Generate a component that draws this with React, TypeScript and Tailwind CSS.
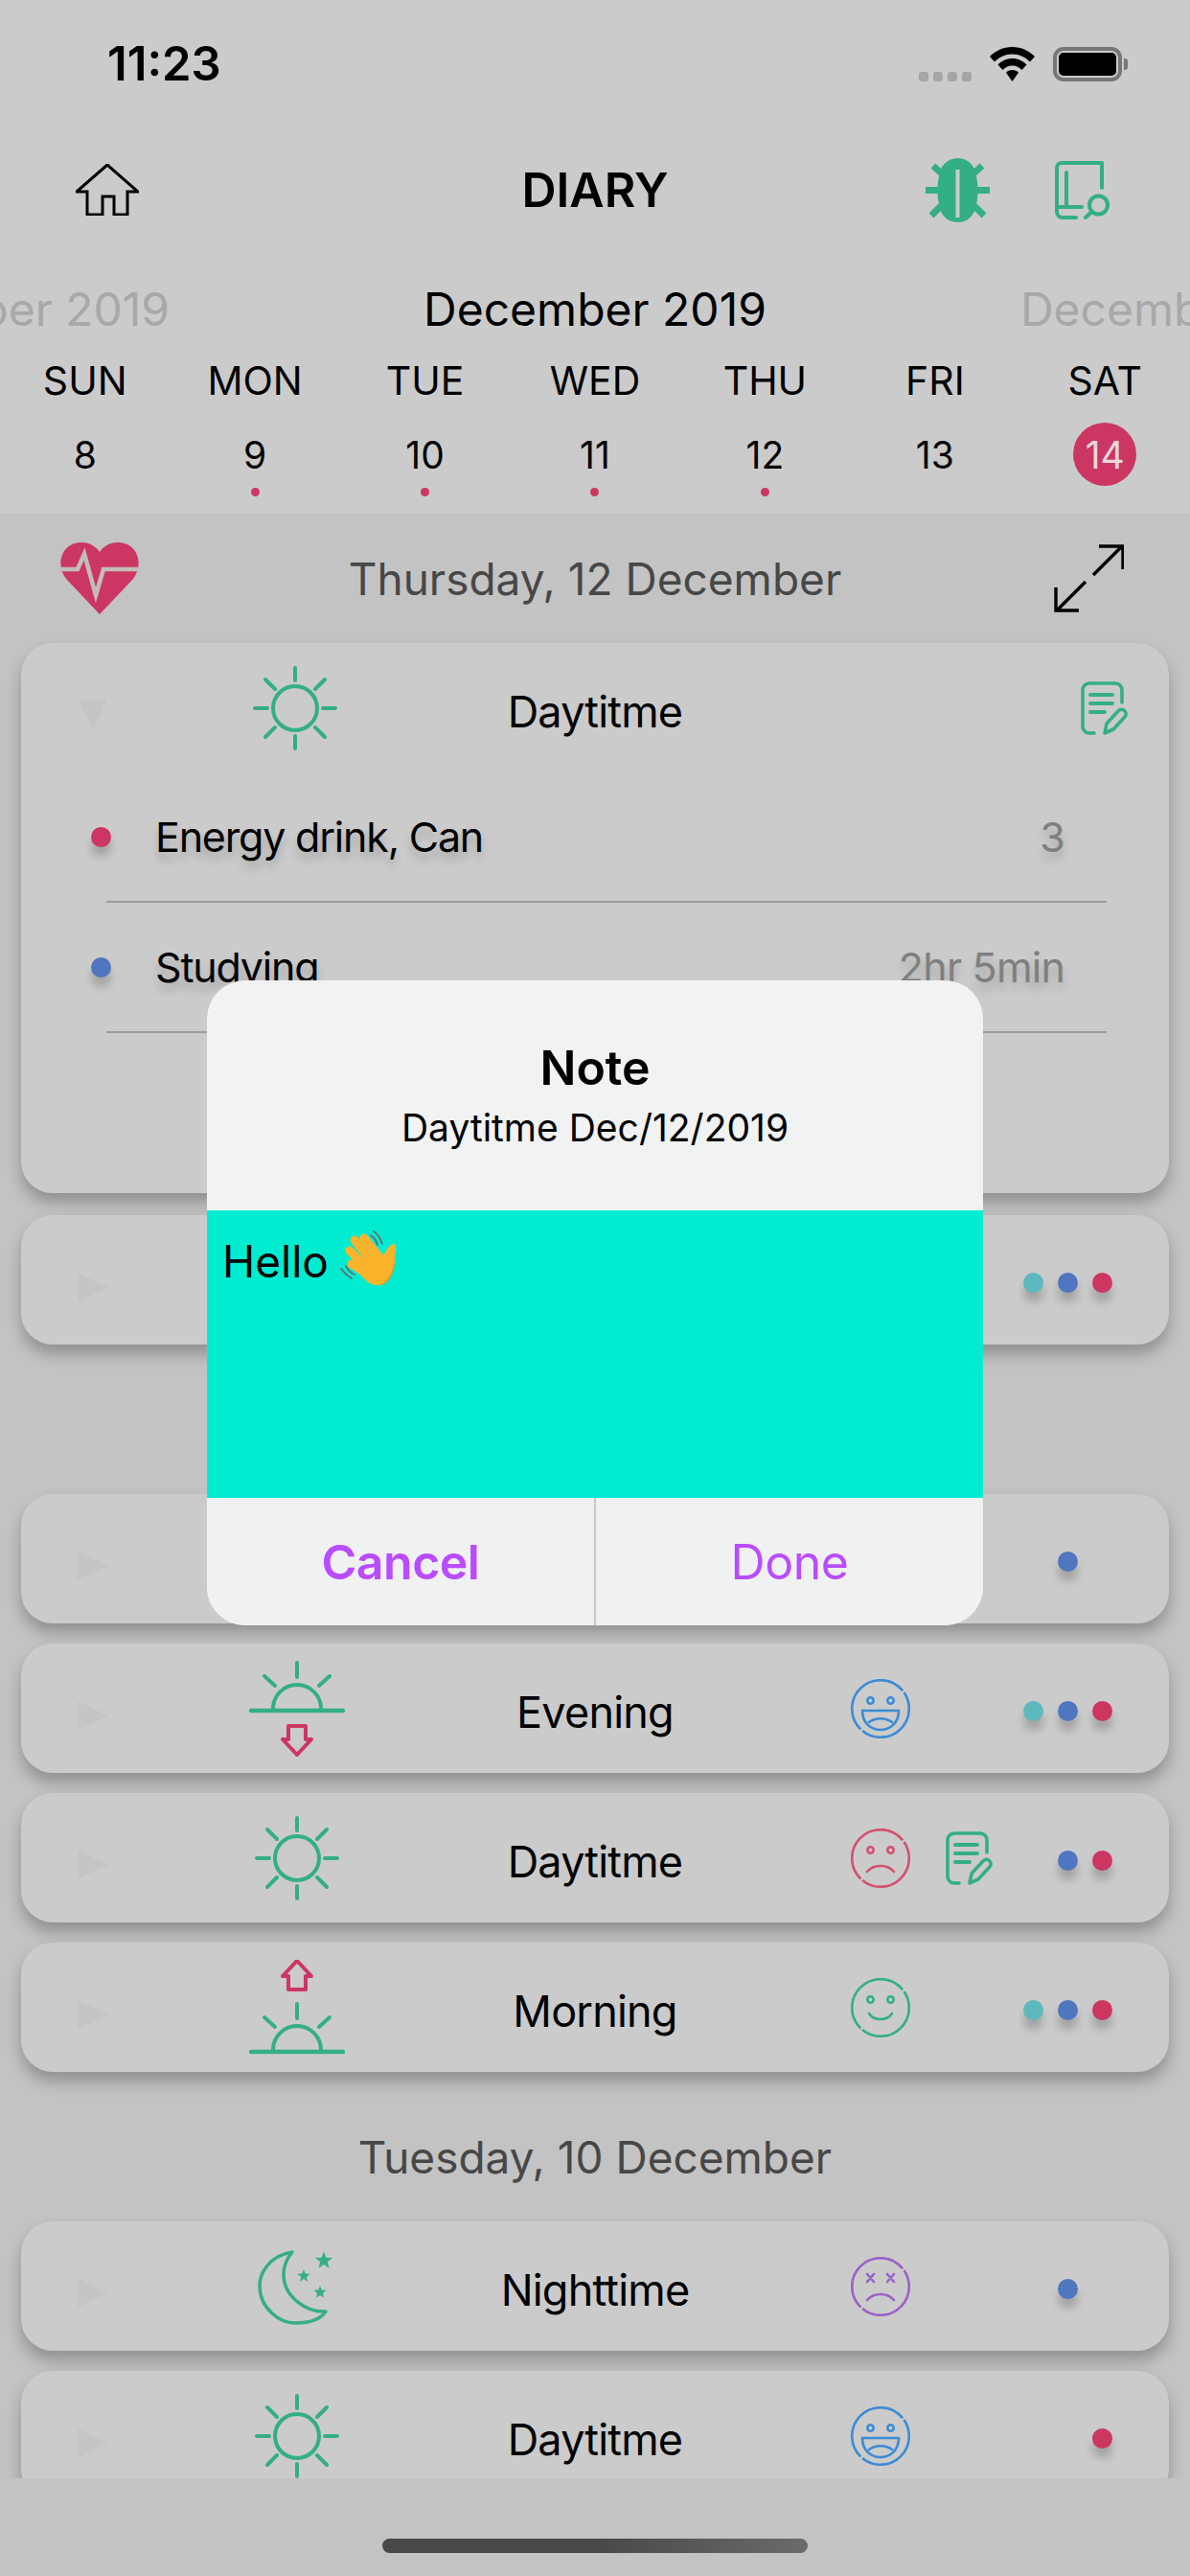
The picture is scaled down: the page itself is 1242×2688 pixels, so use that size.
const GREEN = "#34ae85";
const RED = "#cc3663";

const days = [
  { name: "SUN", date: 8, mark: false },
  { name: "MON", date: 9, mark: true },
  { name: "TUE", date: 10, mark: true },
  { name: "WED", date: 11, mark: true },
  { name: "THU", date: 12, mark: true },
  { name: "FRI", date: 13, mark: false },
  { name: "SAT", date: 14, mark: false },
];

type Period = "day" | "evening" | "morning" | "night";
type Mood = "grin" | "sad" | "smile" | "dead";

function SunIcon() {
  return (
    <svg width="88" height="88" viewBox="0 0 88 88" fill="none" stroke={GREEN} strokeWidth="4" strokeLinecap="round">
      <circle cx="44" cy="44" r="23" />
      <path d="M44 2V15M44 73V86M2 44H15M73 44H86M13 14L23 24M75 14L65 24M13 74L23 64M75 74L65 64" />
    </svg>
  );
}

function SunsetIcon() {
  return (
    <svg width="100" height="100" viewBox="0 0 100 100" fill="none" strokeLinecap="round">
      <g stroke={GREEN} strokeWidth="4">
        <path d="M50 2V17M16 16L27 26M84 16L73 26M25 50A25 25 0 0 1 75 50" />
        <path d="M2 52H98" strokeWidth="4.5" />
      </g>
      <path d="M41 68H59V82H65L50 98L35 82H41Z" stroke={RED} strokeWidth="4" strokeLinejoin="round" />
    </svg>
  );
}

function SunriseIcon() {
  return (
    <svg width="100" height="100" viewBox="0 0 100 100" fill="none" strokeLinecap="round">
      <path d="M41 31H59V17H65L50 1L35 17H41Z" stroke={RED} strokeWidth="4" strokeLinejoin="round" />
      <g stroke={GREEN} strokeWidth="4">
        <path d="M50 46V61M16 60L27 70M84 60L73 70M25 94A25 25 0 0 1 75 94" />
        <path d="M2 96H98" strokeWidth="4.5" />
      </g>
    </svg>
  );
}

function starPoints(cx: number, cy: number, r: number) {
  const pts: string[] = [];
  for (let i = 0; i < 10; i++) {
    const a = -Math.PI / 2 + (i * Math.PI) / 5;
    const rad = i % 2 === 0 ? r : r * 0.42;
    pts.push(`${cx + rad * Math.cos(a)},${cy + rad * Math.sin(a)}`);
  }
  return pts.join(" ");
}

function MoonIcon() {
  return (
    <svg width="110" height="110" viewBox="5 0 110 110" fill="none">
      <path
        d="M55 19C30 23 21 42 21 54C21 78 42 93 58 93C72 93 84 90 90 81C70 82 46 66 46 42C46 32 50 25 55 19Z"
        stroke={GREEN}
        strokeWidth="3.5"
        strokeLinejoin="round"
      />
      <polygon points={starPoints(88, 28, 9.5)} fill={GREEN} />
      <polygon points={starPoints(67, 44, 7)} fill={GREEN} />
      <polygon points={starPoints(84, 61, 7)} fill={GREEN} />
    </svg>
  );
}

function PeriodIcon({ period }: { period: Period }) {
  if (period === "evening") return <SunsetIcon />;
  if (period === "morning") return <SunriseIcon />;
  if (period === "night") return <MoonIcon />;
  return <SunIcon />;
}

function MoodIcon({ mood }: { mood: Mood }) {
  const color = { grin: "#3b8bd6", sad: "#d4506f", smile: "#34ae85", dead: "#9a62c6" }[mood];
  return (
    <svg width="62" height="62" viewBox="0 0 62 62" fill="none" stroke={color} strokeWidth="2.6" strokeLinecap="round" strokeLinejoin="round">
      {/* the ring has two small breaks, upper right and lower left */}
      <circle cx="31" cy="31" r="29.8" pathLength={100} strokeDasharray="36 1.2 52 1.2 9.6" strokeLinecap="butt" />
      {mood === "dead" ? (
        <path d="M17 18L24 26M24 18L17 26M38 18L45 26M45 18L38 26" strokeWidth="2.6" />
      ) : (
        <>
          <circle cx="20.5" cy="22.5" r="3.2" />
          <circle cx="41.5" cy="22.5" r="3.2" />
        </>
      )}
      {mood === "grin" && (
        <>
          <path d="M12 33H50C50 46 41 53 31 53C21 53 12 46 12 33Z" />
          <path d="M19 45C26 40 36 40 43 45" />
        </>
      )}
      {mood === "smile" && <path d="M19 37C24 45 38 45 43 37" />}
      {(mood === "sad" || mood === "dead") && <path d="M17 45C24 37 38 37 45 45" />}
    </svg>
  );
}

function NoteIcon() {
  return (
    <svg width="50" height="56" viewBox="0 0 50 56" fill="none" stroke={GREEN} strokeWidth="3.6" strokeLinecap="round" strokeLinejoin="round">
      <path d="M43 22V9A7 7 0 0 0 36 2H9A7 7 0 0 0 2 9V47A7 7 0 0 0 9 54H14" />
      <path d="M10 14H33M10 23H33M10 32H25" strokeWidth="4" />
      <path d="M25 54L27 44L39 31A4.2 4.2 0 0 1 46 37L34 50Z" />
    </svg>
  );
}

function BugIcon() {
  return (
    <svg width="67" height="67" viewBox="0 0 67 67" fill="none">
      <path d="M0 33.5H67M8 8L21 20M59 8L46 20M6 60L19 47M61 60L48 47" stroke={GREEN} strokeWidth="7" />
      <path d="M33.5 0C45 0 52 9 53 19C55 26 55 41 53 48C52 58 45 67 33.5 67C22 67 15 58 14 48C12 41 12 26 14 19C15 9 22 0 33.5 0Z" fill={GREEN} />
      <path d="M33.5 12V62" stroke="#cbcbcb" strokeWidth="4" />
    </svg>
  );
}

function BookIcon() {
  return (
    <svg width="57" height="61" viewBox="0 0 57 61" fill="none" stroke={GREEN} strokeWidth="4" strokeLinecap="round" strokeLinejoin="round">
      <path d="M49 28V2H7A5 5 0 0 0 2 7V53A6 6 0 0 0 8 59H22" />
      <path d="M12 12V48M5 48H28" />
      <circle cx="45.5" cy="46" r="9.5" />
      <path d="M38.5 53L32 59" />
    </svg>
  );
}

function HomeIcon() {
  return (
    <svg width="66" height="54" viewBox="19 9 66 54" fill="none" stroke="#000" strokeWidth="3" strokeLinejoin="miter">
      <path d="M20 38L52 10L84 38H73V62H59V43H47V62H31V38Z" />
    </svg>
  );
}

function HeartIcon() {
  return (
    <svg width="82" height="75" viewBox="0 0 82 75" fill="none">
      <path d="M41 75L6 38C-6 22 2 0 22 0C31 0 38 5 41 10C44 5 51 0 60 0C80 0 88 22 76 38Z" fill={RED} />
      <path d="M0 28H18L25 12L37 55L45 28H82" stroke="#c3bdb8" strokeWidth="4.5" />
    </svg>
  );
}

function ExpandIcon() {
  return (
    <svg width="73" height="71" viewBox="0 0 73 71" fill="none" stroke="#000" strokeWidth="3.4">
      <path d="M41 32L71 2M47 2H72V26M33 39L3 69M2 45V69H26" />
    </svg>
  );
}

function WaveHand() {
  return (
    <svg width="74" height="64" viewBox="8 12 74 64" fill="none" className="ml-[6px] -mt-[6px]" strokeLinecap="round">
      <path d="M49 16C54 19 56 23 58 29M46 20C50 23 52 26 53 30M15 55C18 59 21 62 26 65M20 52C22 56 25 59 29 61" stroke="#6b6b73" strokeWidth="1.8" />
      <g stroke="#fbb32c" strokeWidth="9">
        <path d="M29 25L47 47M39 23L57 45M24 36L42 54M26 50L42 60" />
      </g>
      <path d="M38 44L60 40C62 36 65 30 70 29C73 30 72 36 71 42C72 56 66 72 54 72C44 73 38 64 32 58Z" fill="#fbb32c" />
      <path d="M54 72C64 70 70 58 71 42C72 56 66 73 54 72Z" fill="#e8941a" />
    </svg>
  );
}

function Dots({ colors }: { colors: (string | null)[] }) {
  return (
    <div className="flex w-[93px] shrink-0 translate-y-[3px] gap-[15px]">
      {colors.map((color, i) => (
        <span
          key={i}
          className={`h-[21px] w-[21px] rounded-full ${color ? "shadow-[0_10px_10px_rgba(0,0,0,0.2)]" : ""}`}
          style={{ backgroundColor: color ?? "transparent" }}
        />
      ))}
    </div>
  );
}

const TEAL = "#5db9bd";
const BLUE = "#5076bf";

function Triangle({ down }: { down?: boolean }) {
  return (
    <div
      className={
        down
          ? "h-0 w-0 translate-y-[7px] border-x-[15px] border-t-[32px] border-x-transparent border-t-[#c5c5c8]"
          : "h-0 w-0 translate-y-[7px] border-y-[15px] border-l-[32px] border-y-transparent border-l-[#c5c5c8]"
      }
    />
  );
}

function EntryCard({
  period,
  label,
  mood,
  note,
  dots,
}: {
  period: Period;
  label: string;
  mood?: Mood;
  note?: boolean;
  dots: (string | null)[];
}) {
  return (
    <div className="mb-[21px] grid h-[135px] shrink-0 grid-cols-[1fr_auto_1fr] items-center rounded-[33px] bg-[#cbcbcb] shadow-[0_10px_16px_rgba(0,0,0,0.26)]">
      <div className="flex items-center pl-[59px]">
        <Triangle />
        <div className="ml-[137px] flex w-[120px] justify-center">
          <PeriodIcon period={period} />
        </div>
      </div>
      <span className="pt-2 text-[45px] leading-none tracking-[-0.8px] text-black">{label}</span>
      <div className="flex items-center justify-end pr-[59px]">
        {mood && <MoodIcon mood={mood} />}
        <div className="ml-[37px] mr-[31px] w-[50px]">{note && <NoteIcon />}</div>
        <Dots colors={dots} />
      </div>
    </div>
  );
}

function DetailRow({ dot, name, value }: { dot: string; name: string; value: string }) {
  return (
    <div className="flex h-[134px] items-center pl-[73px] pr-[109px] [text-shadow:0_8px_10px_rgba(0,0,0,0.2)]">
      <span className="h-[21px] w-[21px] rounded-full shadow-[0_10px_10px_rgba(0,0,0,0.2)]" style={{ backgroundColor: dot }} />
      <span className="ml-[46px] flex-1 text-[43px] leading-none tracking-[-1.2px] text-black">{name}</span>
      <span className="text-[43px] leading-none tracking-[-0.8px] text-[#7f7f7f]">{value}</span>
    </div>
  );
}

function DayHeading({ children }: { children: string }) {
  return (
    <div className="flex h-[135px] shrink-0 items-center justify-center text-[46px] leading-none text-[#474747]">
      {children}
    </div>
  );
}

export default function App() {
  return (
    <div className="relative flex h-[2688px] w-[1242px] flex-col overflow-hidden bg-[#c3c3c3] [font-family:Inter,sans-serif]">
      <header className="h-[536px] shrink-0 bg-[#cbcbcb]">
        {/* status bar */}
        <div className="flex h-[135px] items-start justify-between pl-[112px] pr-[65px] pt-[49px]">
          <span className="text-[49px] font-semibold leading-[36px] text-black">11:23</span>
          <div className="flex h-[36px] items-end gap-[19px]">
            <div className="flex gap-[5px]">
              {[0, 1, 2, 3].map((i) => (
                <span key={i} className="h-[10px] w-[10px] rounded-[3px] bg-[#a5a5a5]" />
              ))}
            </div>
            <svg width="47" height="36" viewBox="0 0 47 36" fill="#000">
              <path d="M23.5 0C14 0 6 4 0 10L5 15.5C10 10.5 16 7.5 23.5 7.5C31 7.5 37 10.5 42 15.5L47 10C41 4 33 0 23.5 0Z" />
              <path d="M23.5 12C17.5 12 12.5 14.500 8.500 18.500L13.500 24C16 21.500 19.500 19.500 23.500 19.500C27.500 19.500 31 21.500 33.500 24L38.500 18.500C34.500 14.500 29.500 12 23.500 12Z" />
              <path d="M23.5 24C21 24 18.500 25 17 26.800L23.500 36L30 26.800C28.500 25 26 24 23.500 24Z" />
            </svg>
            <div className="flex items-center">
              <div className="flex h-[36px] w-[72px] items-center justify-center rounded-[11px] border-[4px] border-[#777]">
                <div className="h-[24px] w-[60px] rounded-[5px] bg-black" />
              </div>
              <div className="ml-[2px] h-[12px] w-[4px] rounded-r-[3px] bg-[#777]" />
            </div>
          </div>
        </div>

        {/* title bar */}
        <div className="grid h-[126px] grid-cols-[1fr_auto_1fr] items-center">
          <div className="pl-[79px]">
            <HomeIcon />
          </div>
          <span className="text-[50px] font-semibold leading-none text-black">DIARY</span>
          <div className="flex items-center justify-end gap-[68px] pr-[84px]">
            <BugIcon />
            <BookIcon />
          </div>
        </div>

        {/* month pager */}
        <div className="flex h-[111px] items-center justify-center gap-[265px] overflow-hidden whitespace-nowrap pt-3 text-[48px] leading-none">
          <span className="shrink-0 text-[#a8a8a8]">November 2019</span>
          <span className="shrink-0 text-black">December 2019</span>
          <span className="shrink-0 text-[#a8a8a8]">December 2019</span>
        </div>

        {/* week strip */}
        <div className="grid grid-cols-7">
          {days.map((d) => (
            <div key={d.name} className="flex flex-col items-center">
              <span className="flex h-[50px] items-center text-[41px] leading-none text-black">{d.name}</span>
              <span
                className={`mt-[19px] flex h-[66px] w-[66px] items-center justify-center rounded-full text-[39px] leading-none ${
                  d.date === 14 ? "bg-[#cc3663] text-[#e8d8dc]" : "text-black"
                }`}
              >
                {d.date}
              </span>
              <span className={`mt-[2px] h-[9px] w-[9px] rounded-full ${d.mark ? "bg-[#cc3663]" : ""}`} />
            </div>
          ))}
        </div>
      </header>

      {/* diary list */}
      <main className="flex h-[2050px] shrink-0 flex-col overflow-hidden px-[22px]">
        <div className="grid h-[135px] shrink-0 grid-cols-[1fr_auto_1fr] items-center">
          <div className="pl-[41px]">
            <HeartIcon />
          </div>
          <span className="text-[46px] leading-none text-[#474747]">Thursday, 12 December</span>
          <div className="flex justify-end pr-[47px]">
            <ExpandIcon />
          </div>
        </div>

        <div className="mb-[23px] h-[574px] shrink-0 rounded-[33px] bg-[#cbcbcb] shadow-[0_10px_16px_rgba(0,0,0,0.26)]">
          <div className="grid h-[135px] grid-cols-[1fr_auto_1fr] items-center">
            <div className="flex items-center pl-[60px]">
              <Triangle down />
              <div className="ml-[136px] flex w-[120px] justify-center">
                <SunIcon />
              </div>
            </div>
            <span className="pt-2 text-[45px] leading-none tracking-[-0.8px] text-black">Daytitme</span>
            <div className="flex justify-end pr-[42px]">
              <NoteIcon />
            </div>
          </div>
          <DetailRow dot="#cc3663" name="Energy drink, Can" value="3" />
          <div className="ml-[89px] mr-[65px] h-[2px] bg-[#9c9c9c]" />
          <DetailRow dot="#5076bf" name="Studying" value="2hr 5min" />
          <div className="ml-[89px] mr-[65px] h-[2px] bg-[#9c9c9c]" />
        </div>

        <EntryCard period="night" label="Nighttime" dots={[TEAL, BLUE, RED]} />
        <DayHeading>Wednesday, 11 December</DayHeading>
        <EntryCard period="night" label="Nighttime" dots={[null, BLUE, null]} />
        <EntryCard period="evening" label="Evening" mood="grin" dots={[TEAL, BLUE, RED]} />
        <EntryCard period="day" label="Daytitme" mood="sad" note dots={[null, BLUE, RED]} />
        <EntryCard period="morning" label="Morning" mood="smile" dots={[TEAL, BLUE, RED]} />
        <DayHeading>Tuesday, 10 December</DayHeading>
        <EntryCard period="night" label="Nighttime" mood="dead" dots={[null, BLUE, null]} />
        <EntryCard period="day" label="Daytitme" mood="grin" dots={[null, null, RED]} />
      </main>

      <div className="flex flex-1 justify-center pt-[63px]">
        <div className="h-[15px] w-[444px] rounded-full bg-gradient-to-r from-[#484848] via-[#484848] to-[#6b6b6b]" />
      </div>

      {/* note dialog */}
      <div className="absolute left-[216px] top-[1023px] w-[810px] overflow-hidden rounded-[40px] bg-[#f1f2f2]">
        <div className="flex h-[240px] flex-col items-center pt-[66px]">
          <span className="text-[50px] font-semibold leading-[50px] text-black">Note</span>
          <span className="mt-[16px] text-[39px] leading-[44px] text-black">Daytitme Dec/12/2019</span>
        </div>
        <div className="flex h-[300px] items-start bg-[#00ecd0] pl-[16px] pt-[24px] text-[46px] leading-[58px] text-black">
          Hello
          <WaveHand />
        </div>
        <div className="flex h-[133px] bg-[#f0f1f1]">
          <span className="flex flex-1 items-center justify-center border-r-[2px] border-[#c9c9c9] text-[50px] font-semibold leading-none tracking-[-0.5px] text-[#b94cff]">
            Cancel
          </span>
          <span className="flex flex-1 items-center justify-center text-[50px] leading-none tracking-[-0.5px] text-[#b94cff]">Done</span>
        </div>
      </div>
    </div>
  );
}
